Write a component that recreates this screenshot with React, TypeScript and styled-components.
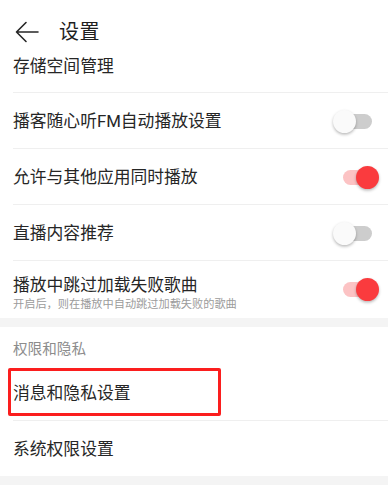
import React from "react";
import styled, { createGlobalStyle } from "styled-components";

const Global = createGlobalStyle`
  html, body { margin: 0; padding: 0; background: #ffffff; }
  body { font-family: Roboto, "Noto Sans CJK SC", sans-serif; -webkit-font-smoothing: antialiased; }
  * { box-sizing: border-box; }
`;

const Page = styled.div`
  width: 388px;
  height: 485px;
  overflow: hidden;
  background: #ffffff;
  display: flex;
  flex-direction: column;
`;

const Header = styled.div`
  height: 38px;
  flex: none;
  display: flex;
  align-items: flex-start;
  padding: 20px 0 0 14px;
  gap: 19px;
`;

const BackIcon = styled.svg`
  width: 26px;
  height: 24px;
  display: block;
`;

const Title = styled.div`
  font-size: 20px;
  line-height: 24px;
  color: #1f1f1f;
  letter-spacing: 0.5px;
`;

const Row = styled.div<{ $h?: number; $last?: boolean }>`
  position: relative;
  flex: none;
  height: ${(p) => p.$h ?? 56}px;
  display: flex;
  align-items: center;
  justify-content: space-between;
  padding: 0 9px 0 13px;
  &::after {
    content: "";
    display: ${(p) => (p.$last ? "none" : "block")};
    position: absolute;
    left: 13px;
    right: 0;
    bottom: 0;
    height: 1px;
    background: #efefef;
  }
`;

const TextCol = styled.div`
  display: flex;
  flex-direction: column;
  gap: 3px;
  padding-top: 7px;
`;

const Label = styled.div`
  font-size: 16.8px;
  line-height: 20px;
  color: #262626;
  white-space: nowrap;
`;

const Sub = styled.div`
  font-size: 11.2px;
  line-height: 14px;
  color: #9b9b9b;
  white-space: nowrap;
`;

const Band = styled.div`
  flex: none;
  height: 9px;
  background: #f4f4f4;
`;

const SectionTitle = styled.div`
  flex: none;
  height: 38px;
  padding: 15px 13px 0;
  font-size: 14.6px;
  line-height: 15px;
  color: #8c8c8c;
`;

const SwitchBox = styled.div`
  position: relative;
  width: 46px;
  height: 24px;
  flex: none;
`;

const Track = styled.div<{ $on: boolean }>`
  position: absolute;
  left: 10px;
  top: 4.5px;
  width: 29px;
  height: 15px;
  border-radius: 8px;
  background: ${(p) => (p.$on ? "#fcc3c4" : "#cdcdcd")};
`;

const Thumb = styled.div<{ $on: boolean }>`
  position: absolute;
  top: 0.5px;
  left: ${(p) => (p.$on ? 23 : 0)}px;
  width: 23px;
  height: 23px;
  border-radius: 50%;
  background: ${(p) => (p.$on ? "#fa3b3e" : "#fafafa")};
  box-shadow: 0 1.5px 3px rgba(0, 0, 0, 0.28);
`;

const Highlight = styled.div`
  position: absolute;
  left: 8px;
  top: 3px;
  width: 213px;
  height: 48px;
  border: 3px solid #fb1e1e;
  border-radius: 2px;
  pointer-events: none;
`;

const Switch = ({ on }: { on: boolean }) => (
  <SwitchBox>
    <Track $on={on} />
    <Thumb $on={on} />
  </SwitchBox>
);

export default function App() {
  return (
    <Page>
      <Global />
      <Header>
        <BackIcon viewBox="0 0 26 24" fill="none">
          <path
            d="M24 12H2.5M12 2.5L2.5 12L12 21.5"
            stroke="#262626"
            strokeWidth="1.6"
            strokeLinecap="round"
            strokeLinejoin="round"
          />
        </BackIcon>
        <Title>设置</Title>
      </Header>
      <Row $h={55}>
        <Label>存储空间管理</Label>
      </Row>
      <Row>
        <Label>播客随心听FM自动播放设置</Label>
        <Switch on={false} />
      </Row>
      <Row>
        <Label>允许与其他应用同时播放</Label>
        <Switch on={true} />
      </Row>
      <Row>
        <Label>直播内容推荐</Label>
        <Switch on={false} />
      </Row>
      <Row $h={57} $last>
        <TextCol>
          <Label>播放中跳过加载失败歌曲</Label>
          <Sub>开启后，则在播放中自动跳过加载失败的歌曲</Sub>
        </TextCol>
        <Switch on={true} />
      </Row>
      <Band />
      <SectionTitle>权限和隐私</SectionTitle>
      <Row>
        <Label>消息和隐私设置</Label>
        <Highlight />
      </Row>
      <Row $h={55} $last>
        <Label>系统权限设置</Label>
      </Row>
      <Band />
    </Page>
  );
}
